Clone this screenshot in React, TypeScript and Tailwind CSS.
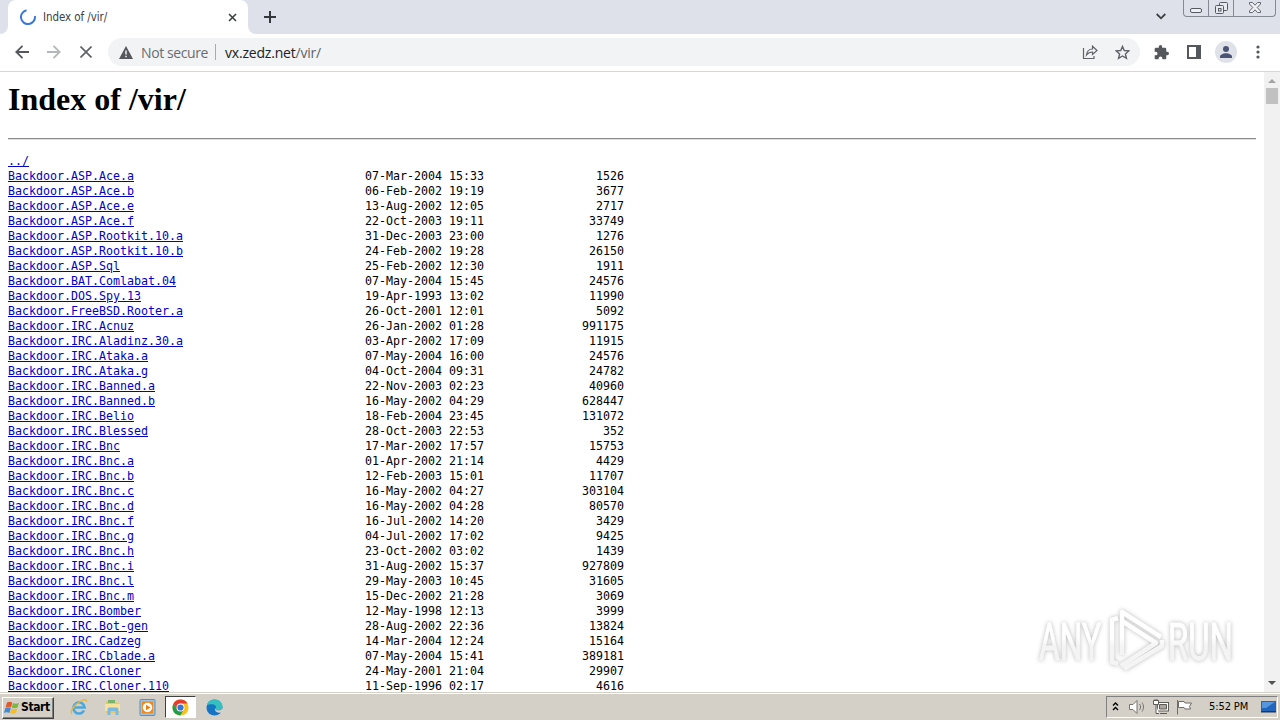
import { FC, ReactNode } from 'react'

interface Entry {
  name: string
  date: string
  size: string
}

const LISTING = `Backdoor.ASP.Ace.a|07-Mar-2004 15:33|1526
Backdoor.ASP.Ace.b|06-Feb-2002 19:19|3677
Backdoor.ASP.Ace.e|13-Aug-2002 12:05|2717
Backdoor.ASP.Ace.f|22-Oct-2003 19:11|33749
Backdoor.ASP.Rootkit.10.a|31-Dec-2003 23:00|1276
Backdoor.ASP.Rootkit.10.b|24-Feb-2002 19:28|26150
Backdoor.ASP.Sql|25-Feb-2002 12:30|1911
Backdoor.BAT.Comlabat.04|07-May-2004 15:45|24576
Backdoor.DOS.Spy.13|19-Apr-1993 13:02|11990
Backdoor.FreeBSD.Rooter.a|26-Oct-2001 12:01|5092
Backdoor.IRC.Acnuz|26-Jan-2002 01:28|991175
Backdoor.IRC.Aladinz.30.a|03-Apr-2002 17:09|11915
Backdoor.IRC.Ataka.a|07-May-2004 16:00|24576
Backdoor.IRC.Ataka.g|04-Oct-2004 09:31|24782
Backdoor.IRC.Banned.a|22-Nov-2003 02:23|40960
Backdoor.IRC.Banned.b|16-May-2002 04:29|628447
Backdoor.IRC.Belio|18-Feb-2004 23:45|131072
Backdoor.IRC.Blessed|28-Oct-2003 22:53|352
Backdoor.IRC.Bnc|17-Mar-2002 17:57|15753
Backdoor.IRC.Bnc.a|01-Apr-2002 21:14|4429
Backdoor.IRC.Bnc.b|12-Feb-2003 15:01|11707
Backdoor.IRC.Bnc.c|16-May-2002 04:27|303104
Backdoor.IRC.Bnc.d|16-May-2002 04:28|80570
Backdoor.IRC.Bnc.f|16-Jul-2002 14:20|3429
Backdoor.IRC.Bnc.g|04-Jul-2002 17:02|9425
Backdoor.IRC.Bnc.h|23-Oct-2002 03:02|1439
Backdoor.IRC.Bnc.i|31-Aug-2002 15:37|927809
Backdoor.IRC.Bnc.l|29-May-2003 10:45|31605
Backdoor.IRC.Bnc.m|15-Dec-2002 21:28|3069
Backdoor.IRC.Bomber|12-May-1998 12:13|3999
Backdoor.IRC.Bot-gen|28-Aug-2002 22:36|13824
Backdoor.IRC.Cadzeg|14-Mar-2004 12:24|15164
Backdoor.IRC.Cblade.a|07-May-2004 15:41|389181
Backdoor.IRC.Cloner|24-May-2001 21:04|29907
Backdoor.IRC.Cloner.110|11-Sep-1996 02:17|4616`

const entries: Entry[] = LISTING.split('\n').map((line) => {
  const [name, date, size] = line.split('|')
  return { name, date, size }
})

const TabStrip: FC = () => (
  <div className="h-[34px] shrink-0 bg-[#dee1e9] flex justify-between">
    <div className="flex">
      <div className="w-2 bg-white">
        <div className="h-full bg-[#dee1e9] rounded-br-lg" />
      </div>
      <div className="w-60 bg-white rounded-t-lg flex items-center pl-3 pr-[11px]">
        <svg className="w-4 h-4 shrink-0" viewBox="0 0 16 16" fill="none" stroke="#3b78d8" strokeWidth="2">
          <path d="M6.500 1.200A7 7 0 1 0 14.900 7" />
        </svg>
        <span className="ml-[7px] mt-0.5 grow font-['DejaVu_Sans_Condensed','DejaVu_Sans',sans-serif] text-[11.5px] tracking-[-0.08px] text-[#3c4043]">
          Index of /vir/
        </span>
        <svg className="w-[9px] h-[9px]" viewBox="0 0 9 9" stroke="#3c4043" strokeWidth="1.6">
          <path d="M1 1l7 7M8 1L1 8" />
        </svg>
      </div>
      <div className="w-2 bg-white">
        <div className="h-full bg-[#dee1e9] rounded-bl-lg" />
      </div>
      <svg className="mt-[11px] ml-2 w-3 h-3" viewBox="0 0 12 12" stroke="#34373b" strokeWidth="2">
        <path d="M6 0v12M0 6h12" />
      </svg>
    </div>
    <div className="flex">
      <svg className="mt-[13px] mr-[17px] w-[10px] h-[7px]" viewBox="0 0 10 7" fill="none" stroke="#3c4043" strokeWidth="1.8">
        <path d="M.7 1L5 5.3 9.3 1" />
      </svg>
      <div className="h-[17px] w-[93px] mr-1 flex border border-t-0 border-[#858991] rounded-b-[4px]">
        <div className="w-[25px] border-r border-[#858991] flex justify-center pt-2">
          <div className="w-3 h-[5px] border border-[#555960] rounded-[2px] bg-[#eef0f5]" />
        </div>
        <div className="w-[25px] border-r border-[#858991] flex justify-center">
          <svg className="mt-0.5 w-[13px] h-3" viewBox="0 0 13 12" fill="#e6e9ef" stroke="#555960">
            <rect x="4.500" y=".5" width="8" height="8" rx="1" />
            <rect x=".5" y="3.500" width="8" height="8" rx="1" />
            <rect x="3.500" y="6.500" width="2.500" height="2.500" />
          </svg>
        </div>
        <div className="grow flex justify-center">
          <svg className="mt-0.5 w-3 h-[11px]" viewBox="0 0 12 11" fill="#eef0f5" stroke="#555960" strokeWidth=".9">
            <path d="M.5.5h3L6 3.200 8.500.5h3v1.500L8.200 5.500l3.300 3.500v1.500h-3L6 7.800 3.500 10.500h-3V9l3.300-3.500L.5 2z" />
          </svg>
        </div>
      </div>
    </div>
  </div>
)

const ToolIcon: FC<{ children: ReactNode; className?: string }> = ({ children, className }) => (
  <div className={`w-8 h-9 flex items-center justify-center ${className ?? ''}`}>{children}</div>
)

const Toolbar: FC = () => (
  <div className="h-[38px] shrink-0 bg-white border-b border-[#d5d7db] flex items-center pl-1.5 pr-1.5 pb-px">
    <ToolIcon>
      <svg className="w-[14px] h-[14px]" viewBox="0 0 14 14" fill="none" stroke="#54575b" strokeWidth="1.8">
        <path d="M14 7H1.500M7.500.8L1.300 7l6.200 6.200" />
      </svg>
    </ToolIcon>
    <ToolIcon>
      <svg className="w-[14px] h-[14px]" viewBox="0 0 14 14" fill="none" stroke="#b5b7ba" strokeWidth="1.8">
        <path d="M0 7h12.500M6.500.8L12.700 7l-6.200 6.200" />
      </svg>
    </ToolIcon>
    <ToolIcon>
      <svg className="w-3 h-3" viewBox="0 0 12 12" stroke="#5f6368" strokeWidth="1.7">
        <path d="M.5.5l11 11M11.500.5l-11 11" />
      </svg>
    </ToolIcon>
    <div className="ml-1.5 h-7 w-[1032px] rounded-full bg-[#f1f3f4] flex items-center pl-[11px] font-['Open_Sans','Noto_Sans',sans-serif] text-sm">
      <svg className="w-[14px] h-[13px]" viewBox="0 0 14 13">
        <path d="M7 0l7 13H0z" fill="#54575b" />
        <path d="M7 4.500v4M7 9.700v1.500" stroke="#f1f3f4" strokeWidth="1.500" />
      </svg>
      <span className="ml-2 w-[67px] mt-px whitespace-nowrap tracking-[-0.4px] text-[#6a6d71]">Not secure</span>
      <span className="ml-[7px] h-4 w-px bg-[#a8abaf]" />
      <span className="ml-[9px] mt-px grow tracking-[-0.2px] text-[#202124]">
        vx.zedz.net<span className="text-[#5f6368]">/vir/</span>
      </span>
      <svg className="mr-[17px] w-4 h-4" viewBox="0 0 16 16" fill="none" stroke="#5f6368" strokeWidth="1.2">
        <path d="M1.500 4v10.500H12V12" />
        <path d="M4.500 11C5 7 7 5 10.500 5V2.200L15 6.500l-4.500 4V8C8 8 6 9 4.500 11z" />
      </svg>
      <svg className="mr-[10px] w-[15px] h-[15px]" viewBox="0 0 16 16" fill="none" stroke="#5f6368" strokeWidth="1.500">
        <path d="M8 1.500l1.900 4.400 4.800.4-3.600 3.200 1.100 4.700L8 11.700l-4.200 2.500 1.100-4.700-3.600-3.200 4.800-.4z" />
      </svg>
    </div>
    <ToolIcon className="ml-1.5">
      <svg className="w-[15px] h-[15px] mr-px" viewBox="1 1 22 22" fill="#54575b">
        <path d="M20.500 11H19V7c0-1.100-.9-2-2-2h-4V3.500a2.500 2.500 0 0 0-5 0V5H4c-1.100 0-2 .9-2 2v3.800h1.500a2.700 2.700 0 0 1 0 5.400H2V20c0 1.100.9 2 2 2h3.800v-1.500a2.700 2.700 0 0 1 5.400 0V22H17c1.100 0 2-.9 2-2v-4h1.500a2.500 2.500 0 0 0 0-5z" />
      </svg>
    </ToolIcon>
    <ToolIcon>
      <div className="w-[14px] h-[14px] border-2 border-r-[5px] border-[#54575b]" />
    </ToolIcon>
    <ToolIcon>
      <svg className="w-[22px] h-[22px]" viewBox="0 0 22 22">
        <circle cx="11" cy="11" r="11" fill="#dfe2e8" />
        <g fill="#4a5475">
          <circle cx="11" cy="8" r="3" />
          <path d="M5 17v-1.500c0-2 3.500-3.300 6-3.300s6 1.300 6 3.300V17z" />
        </g>
      </svg>
    </ToolIcon>
    <ToolIcon>
      <svg className="w-1 h-[14px]" viewBox="0 0 4 14" fill="#54575b">
        <circle cx="2" cy="2" r="1.600" />
        <circle cx="2" cy="7" r="1.600" />
        <circle cx="2" cy="12" r="1.600" />
      </svg>
    </ToolIcon>
  </div>
)

const Scrollbar: FC = () => (
  <div className="w-4 shrink-0 bg-[#f1f1f1] flex flex-col items-center">
    <svg className="mt-[7px] w-2 h-1" viewBox="0 0 8 4" fill="#a3a3a3">
      <path d="M0 4l4-4 4 4z" />
    </svg>
    <div className="mt-[5px] w-3 h-4 bg-[#c1c1c1]" />
    <div className="grow" />
    <svg className="mb-[7px] w-2 h-1" viewBox="0 0 8 4" fill="#505050">
      <path d="M0 0l4 4 4-4z" />
    </svg>
  </div>
)

const Watermark: FC = () => (
  <svg
    className="absolute left-[1020px] top-[602px] w-[250px] h-[76px] drop-shadow-[0_0_2px_rgba(0,0,0,0.28)]"
    viewBox="1020 602 250 76"
    fontFamily="Roboto, sans-serif"
    fontSize="51"
  >
    <defs>
      <linearGradient id="shade" gradientUnits="userSpaceOnUse" x1="0" y1="638" x2="0" y2="646">
        <stop offset="0" stopColor="#ffffff" />
        <stop offset="1" stopColor="#f4f4f4" />
      </linearGradient>
    </defs>
    <g fill="url(#shade)" stroke="url(#shade)" strokeWidth="1">
      <text x="1039" y="660" textLength="62" lengthAdjust="spacingAndGlyphs">ANY</text>
      <text x="1168" y="660" textLength="65" lengthAdjust="spacingAndGlyphs">RUN</text>
    </g>
    <g fill="none" stroke="url(#shade)" strokeWidth="4.500" strokeLinejoin="round">
      <path d="M1122 655V612l39 25M1122 621l34 22-35 23" />
      <path d="M1118 618l-6 2v42l6 2M1124 669l38-23v-6" />
    </g>
  </svg>
)

const Taskbar: FC = () => (
  <div className="h-[27px] shrink-0 bg-[#d4d0c8] border-t border-white flex items-center pl-0.5 font-['DejaVu_Sans_Condensed','DejaVu_Sans',sans-serif] text-[11px] text-black">
    <div className="w-[52px] h-[22px] mt-px flex items-center pl-px border border-t-white border-l-white border-r-[#404040] border-b-[#404040] shadow-[inset_-1px_-1px_#808080]">
      <svg className="w-4 h-4 shrink-0" viewBox="0 0 16 16">
        <path d="M3 2.500C5 1.300 7 1.700 8.300 2.700L7 7.500C5.500 6.500 3.500 6.300 1.600 7.300z" fill="#e4572b" />
        <path d="M9 3c2 1 4 .8 6-.3l-1.500 4.800c-2 1-4 1-5.800.1z" fill="#7db643" />
        <path d="M1.400 8c2-1 3.900-.8 5.400.2l-1.400 4.700C4 12 2 11.800 0 12.800z" fill="#4389d3" />
        <path d="M7.500 8.500c2 1 3.900.9 5.800-.1l-1.400 4.700c-2 1-4 1-5.800 0z" fill="#f4bd29" />
      </svg>
      <span className="ml-px mb-0.5 font-bold text-[12px] tracking-[-0.4px]">Start</span>
    </div>
    <svg className="ml-[16px] w-[18px] h-[18px]" viewBox="0 0 18 18" fill="none">
      <path d="M14 12.500A5.600 5.600 0 1 1 14.600 9.500H5" stroke="#4aa8e0" strokeWidth="2.600" />
      <path d="M2 16C-1 13 5 6 11 3c4-2 6-1.500 5.500 1" stroke="#e8b83c" strokeWidth="1.300" />
    </svg>
    <svg className="ml-4 w-[18px] h-[18px]" viewBox="0 0 18 18">
      <path d="M2 3h5l1 1.500h7V15H2z" fill="#e9c765" />
      <path d="M4 2h7v3H4z" fill="#7ab36c" />
      <path d="M1 6h15v7H1z" fill="#f7e2a0" />
      <path d="M3.500 17v-5c0-2 1-2.500 2-2.500h7c1 0 2 .5 2 2.500v5h-3v-4h-5v4z" fill="#79b9e2" />
    </svg>
    <svg className="ml-[17px] w-[17px] h-[17px]" viewBox="0 0 17 17">
      <rect x="1" y=".5" width="15" height="16" rx="1" fill="#9bc3e6" stroke="#5b90bd" />
      <rect x="3" y="2.500" width="11" height="12" fill="#f18a1d" />
      <circle cx="8.500" cy="8.500" r="4.700" fill="#fff" />
      <path d="M7 5.800l4.500 2.700L7 11.200z" fill="#ee7c10" />
    </svg>
    <div className="ml-[9px] w-[31px] h-[22px] bg-white border border-t-[#404040] border-l-[#404040] border-r-white border-b-white flex items-center justify-center">
      <svg className="w-[17px] h-[17px]" viewBox="0 0 18 18">
        <circle cx="9" cy="9" r="8.500" fill="#fbc116" />
        <path d="M1.600 4.800A8.500 8.500 0 0 1 16.400 4.800H9L5.400 11.100z" fill="#e33b2e" />
        <path d="M1.600 4.800A8.500 8.500 0 0 0 8.700 17.500L12.600 11.100H5.400z" fill="#229d4d" />
        <circle cx="9" cy="9" r="4.200" fill="white" />
        <circle cx="9" cy="9" r="3.300" fill="#3575df" />
      </svg>
    </div>
    <svg className="ml-[10px] w-[17px] h-[17px]" viewBox="0 0 18 18">
      <circle cx="9" cy="9" r="8.500" fill="#1674c5" />
      <path d="M.7 7C2 2 6 .5 9.500.5c5 0 8 4 8 7.500 0 3-2.500 4-4.500 4-3 0-3.200-1-2.500-2 1-2-1-4.500-4-4.500C4 5.500 2 6 .7 7z" fill="#35bfc0" />
      <path d="M10.500 10c-.7 1-.5 2 2.500 2 1.700 0 3.500-.6 4.300-2.300L18 12l-1.500 2.500c-4 .5-7.500-1-7-4.500z" fill="#d4d0c8" />
    </svg>
    <div className="grow" />
    <div className="w-[172px] h-[22px] mr-0.5 flex items-center border border-t-[#808080] border-l-[#808080] border-r-white border-b-white">
      <svg className="ml-[5px] w-[7px] h-[9px] mb-0.5" viewBox="0 0 7 9" fill="none" stroke="black" strokeWidth="1.400">
        <path d="M1 3.500l2.500-2.500L6 3.500M1 8l2.500-2.500L6 8" />
      </svg>
      <svg className="ml-[9px] w-[18px] h-4" viewBox="0 0 18 16" fill="none" stroke="#77736e">
        <path d="M1.500 5.500H5L9 1.500v13l-4-4H1.500z" fill="white" />
        <path d="M11.500 5c1.500 2 1.500 4 0 6M14 3.500c2 3 2 6 0 9" />
      </svg>
      <svg className="ml-[7px] w-4 h-4" viewBox="0 0 16 16" fill="white" stroke="#5f5c57">
        <rect x="4.500" y="3.500" width="11" height="8.500" />
        <path d="M6.500 5.500h7v4.500h-7z" fill="#aaa69f" />
        <path d="M7 14.500h7M3 6v8.500h3M.5 1.500h5v4h-5zM2 1.500V0M4 1.500V0" />
      </svg>
      <svg className="ml-[7px] w-[17px] h-4" viewBox="0 0 17 16" fill="white" stroke="#6f6b66">
        <path d="M1.500 1v14.500M2.500 2.500h5.500l1 1.500h6.500l-2 3.500 1 2.500H9L8 8.500H2.500z" />
      </svg>
      <span className="ml-4 mt-px w-10 whitespace-nowrap tracking-[-0.1px]">5:52 PM</span>
      <svg className="ml-[12px] w-[15px] h-[14px]" viewBox="0 0 15 14">
        <rect y="1" width="15" height="10" fill="#2364bd" />
        <path d="M1 2h13L5 8H1z" fill="#5597df" />
        <path d="M0 11h15v1.500H0z" fill="#1c3761" />
      </svg>
    </div>
  </div>
)

const App: FC = () => (
  <div className="relative w-[1280px] h-[720px] overflow-hidden flex flex-col bg-white">
    <TabStrip />
    <Toolbar />
    <div className="h-[620px] shrink-0 flex">
      <main className="grow overflow-hidden px-2 text-black">
        <h1 className="mt-[9px] h-[37px] font-['Liberation_Serif',serif] text-[32px] leading-[37px] font-bold">
          Index of /vir/
        </h1>
        <hr className="mt-5 h-0.5 border-t border-b border-t-[#8c8c8c] border-b-[#e0e0e0]" />
        <pre className="mt-[14px] font-['DejaVu_Sans_Mono',monospace] text-[11.63px] leading-[15px]">
          <a className="text-[#0000c8] underline">../</a>
          {entries.map((entry) => (
            <div key={entry.name}>
              <a className="text-[#0000c8] underline">{entry.name}</a>
              {' '.repeat(51 - entry.name.length)}
              {entry.date}
              {entry.size.padStart(20)}
            </div>
          ))}
        </pre>
      </main>
      <Scrollbar />
    </div>
    <div className="h-px shrink-0 bg-[#d4d0c8]" />
    <Taskbar />
    <Watermark />
  </div>
)

export default App
